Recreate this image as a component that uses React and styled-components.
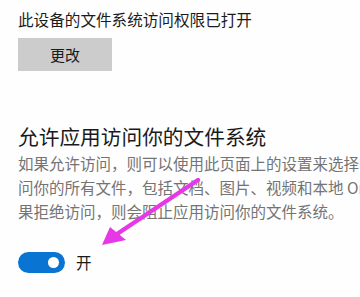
import React from 'react'
import styled, { createGlobalStyle } from 'styled-components'

const Global = createGlobalStyle`
  html, body {
    margin: 0;
    padding: 0;
    background: #fefefe;
  }
  body {
    font-family: "Noto Sans CJK SC", "Noto Sans", sans-serif;
    overflow: hidden;
  }
`

function App() {
    return (
        <>
            <Global />
            <Page>
                <Status>此设备的文件系统访问权限已打开</Status>
                <ChangeBtn>更改</ChangeBtn>

                <Heading>允许应用访问你的文件系统</Heading>
                <Desc>
                    <Line>如果允许访问，则可以使用此页面上的设置来选择哪些应用可以访</Line>
                    <Line>问你的所有文件，包括文档、图片、视频和本地 OneDrive 文件。如</Line>
                    <Line>果拒绝访问，则会阻止应用访问你的文件系统。</Line>
                </Desc>

                <ToggleRow>
                    <Toggle on>
                        <Knob />
                    </Toggle>
                    <ToggleLabel>开</ToggleLabel>
                </ToggleRow>

                {/* annotation arrow drawn over the screenshot */}
                <Arrow width="360" height="297" viewBox="0 0 360 297">
                    <line x1="198" y1="180" x2="117" y2="234" stroke="#e638e6" strokeWidth="4.5" strokeLinecap="round" />
                    <polygon points="102,245 126,240 110,227" fill="#e638e6" />
                </Arrow>
            </Page>
        </>
    )
}

export default App



const Page = styled.div`
position: relative;
width: 360px;
height: 297px;
box-sizing: border-box;
padding: 9px 0 0 18px;
overflow: hidden;
`
const Status = styled.div`
font-size: 15.6px;
line-height: 21px;
color: #1b1b1b;
white-space: nowrap;
`
const ChangeBtn = styled.button`
display: flex;
align-items: center;
justify-content: center;
margin-top: 8px;
width: 94px;
height: 33px;
border: none;
background: #cccccc;
color: #1a1a1a;
font-family: "Noto Sans CJK SC", sans-serif;
font-size: 15px;
padding: 0;
`
const Heading = styled.div`
margin-top: 51px;
font-size: 20.7px;
line-height: 28px;
color: #1a1a1a;
white-space: nowrap;
`
const Desc = styled.div`
margin-top: 1px;
font-size: 15.5px;
line-height: 24px;
color: #747474;
`
const Line = styled.div`
white-space: nowrap;
`
const ToggleRow = styled.div`
display: flex;
align-items: center;
gap: 11px;
margin-top: 29px;
`
const Toggle = styled.div`
position: relative;
width: 47px;
height: 21px;
border-radius: 11px;
background: ${p => (p.on ? '#0a74d3' : '#fff')};
`
const Knob = styled.span`
position: absolute;
right: 6px;
top: 5px;
width: 11px;
height: 11px;
border-radius: 50%;
background: #fff;
`
const ToggleLabel = styled.span`
font-size: 15.5px;
line-height: 21px;
color: #1a1a1a;
`
const Arrow = styled.svg`
position: absolute;
left: 0;
top: 0;
pointer-events: none;
`
